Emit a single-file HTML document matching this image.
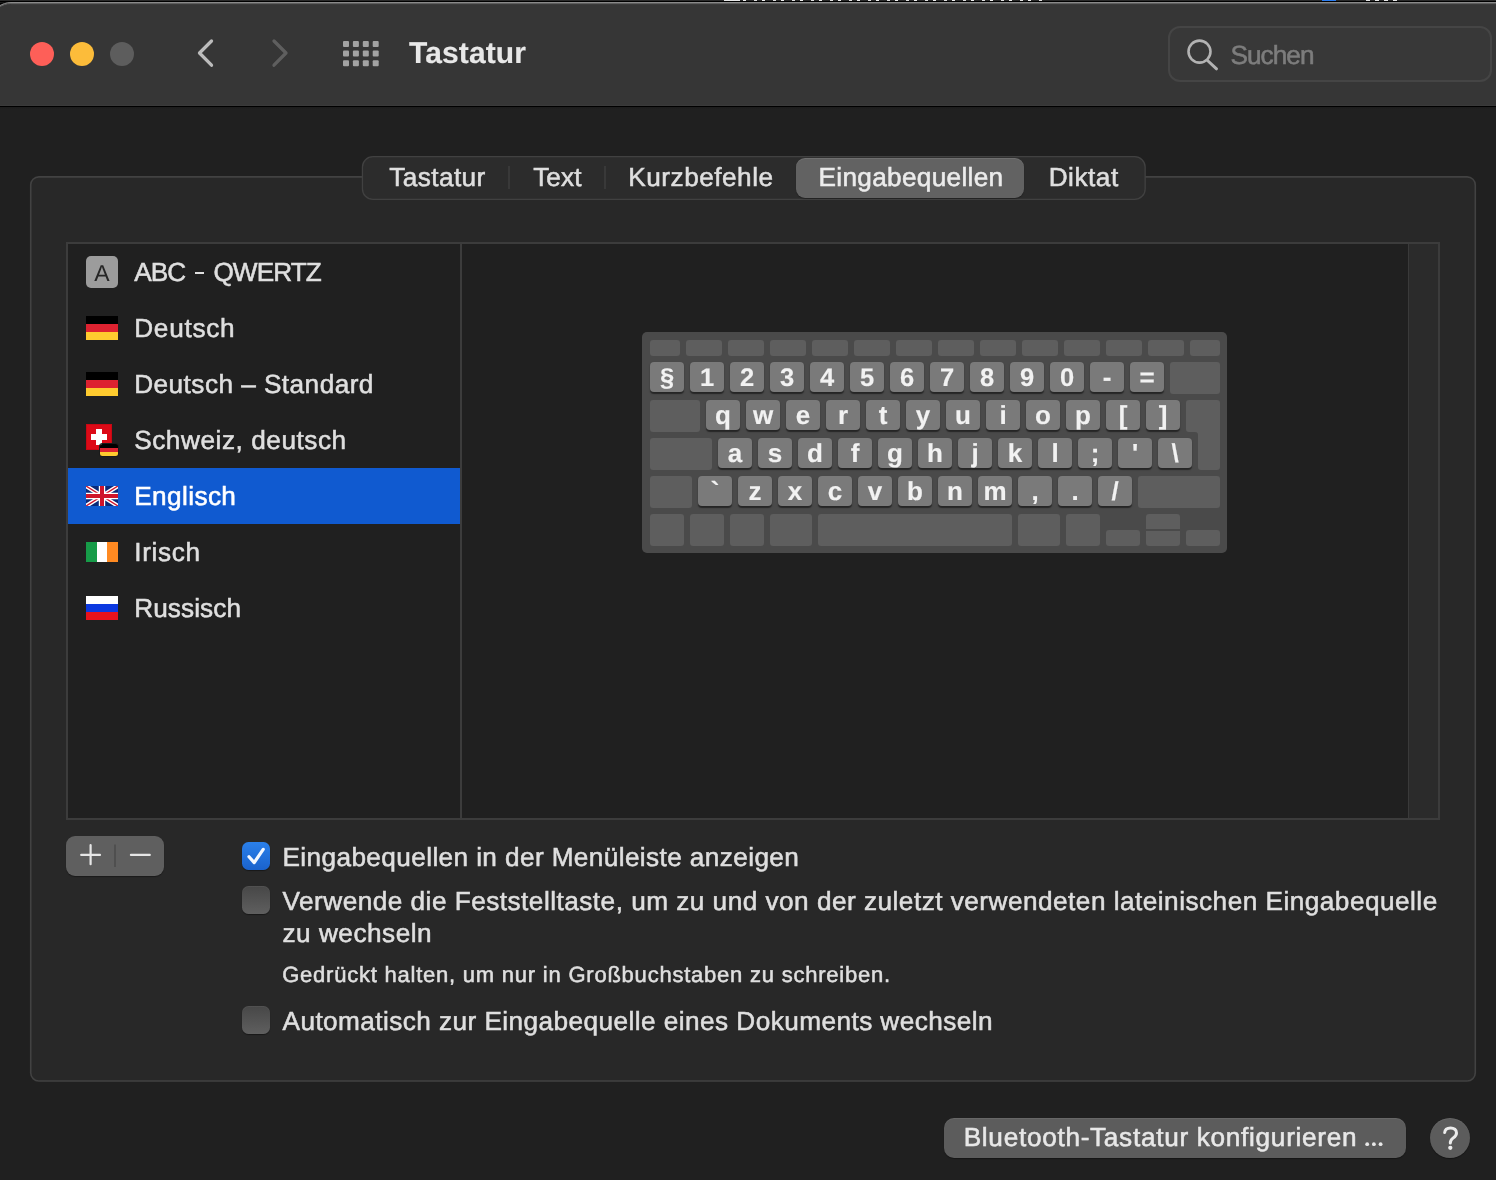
<!DOCTYPE html>
<html><head><meta charset="utf-8"><title>Tastatur</title>
<style>
html,body{margin:0;padding:0;}
body{-webkit-font-smoothing:antialiased;text-rendering:geometricPrecision;width:1496px;height:1180px;overflow:hidden;background:#202020;position:relative;font-family:"Liberation Sans",sans-serif;}
.a{position:absolute;box-sizing:border-box;}
.t{position:absolute;white-space:nowrap;-webkit-text-stroke:0.55px currentColor;}
.k{position:absolute;background:#5e5e5e;border-radius:3px;}
.l{position:absolute;background:#7a7a7a;border-radius:4px;height:30px;width:34px;box-shadow:0 1.5px 1.2px rgba(0,0,0,.5);color:#f2f2f2;font-weight:bold;font-size:26px;line-height:30px;text-align:center;-webkit-text-stroke:0.15px #f2f2f2;}
.d{font-size:25.5px;padding-top:1px;height:29px;}
</style></head><body><div id="w" style="position:absolute;left:0;top:0;width:1496px;height:1180px;overflow:hidden;will-change:transform;">

<div class="a" style="left:0;top:0;width:1496px;height:6px;background:linear-gradient(#2a2a2a 0 1px,#000 1px 2px,#2a2a2a 2px);"></div>
<div class="a" style="left:724px;top:0;width:318px;height:1px;background:repeating-linear-gradient(90deg,#f0f0f0 0 3px,transparent 3px 11px,#e0e0e0 11px 14px,transparent 14px 19px);"></div>
<div class="a" style="left:724px;top:0;width:16px;height:1px;background:#e8e8e8;"></div>
<div class="a" style="left:1322px;top:0;width:14px;height:1px;background:#2b7df0;"></div>
<div class="a" style="left:1366px;top:0;width:32px;height:1px;background:repeating-linear-gradient(90deg,#e8e8e8 0 4px,transparent 4px 9px);"></div>
<div class="a" style="left:0;top:6px;width:1496px;height:100px;background:linear-gradient(#363636 0 99px,#3a3a3a 99px);"></div>
<svg class="a" style="left:0;top:0" width="1496" height="8" viewBox="0 0 1496 8">
<path d="M-1 1.5 H1497" stroke="#000" stroke-width="1"/>
<path d="M-1 3 C3 2.2 7 2 11 2 H1497 V8 H-1 Z" fill="#000"/>
<path d="M-1 5.6 C3 3.6 6 2 11 2 H1497 V8 H-1 Z" fill="#363636"/>
<path d="M-1 7.1 C3 5.1 6 3.5 11 3.5 H1497" fill="none" stroke="#5e5e5e" stroke-width="1"/>
<path d="M-1 6.1 C3 4.1 6 2.5 11 2.5 H1497" fill="none" stroke="#8a8a8a" stroke-width="1"/>
<path d="M11 4.5 H1497" fill="none" stroke="#3b3b3b" stroke-width="1"/>
</svg>
<div class="a" style="left:0;top:106px;width:1496px;height:1px;background:#000;"></div>
<div class="a" style="left:0;top:107px;width:1496px;height:2px;background:linear-gradient(#1c1c1c,#1f1f1f);"></div>
<div class="a" style="left:30px;top:42px;width:24px;height:24px;border-radius:50%;background:#fe5f58;"></div>
<div class="a" style="left:70px;top:42px;width:24px;height:24px;border-radius:50%;background:#fcbc3a;"></div>
<div class="a" style="left:110px;top:42px;width:24px;height:24px;border-radius:50%;background:#5d5d5d;"></div>
<svg class="a" style="left:0;top:0" width="1496" height="106" viewBox="0 0 1496 106">
<path d="M211.5 41 L199.5 53 L211.5 65.2" fill="none" stroke="#bcbcbc" stroke-width="3.3" stroke-linecap="round" stroke-linejoin="round"/>
<path d="M274 41 L286 53 L274 65.2" fill="none" stroke="#5f5f5f" stroke-width="3.3" stroke-linecap="round" stroke-linejoin="round"/>

<rect x="343.0" y="41.0" width="6" height="6" rx="1" fill="#a3a3a3"/>
<rect x="352.9" y="41.0" width="6" height="6" rx="1" fill="#a3a3a3"/>
<rect x="362.8" y="41.0" width="6" height="6" rx="1" fill="#a3a3a3"/>
<rect x="372.7" y="41.0" width="6" height="6" rx="1" fill="#a3a3a3"/>
<rect x="343.0" y="50.6" width="6" height="6" rx="1" fill="#a3a3a3"/>
<rect x="352.9" y="50.6" width="6" height="6" rx="1" fill="#a3a3a3"/>
<rect x="362.8" y="50.6" width="6" height="6" rx="1" fill="#a3a3a3"/>
<rect x="372.7" y="50.6" width="6" height="6" rx="1" fill="#a3a3a3"/>
<rect x="343.0" y="60.2" width="6" height="6" rx="1" fill="#a3a3a3"/>
<rect x="352.9" y="60.2" width="6" height="6" rx="1" fill="#a3a3a3"/>
<rect x="362.8" y="60.2" width="6" height="6" rx="1" fill="#a3a3a3"/>
<rect x="372.7" y="60.2" width="6" height="6" rx="1" fill="#a3a3a3"/>
<rect x="1169" y="27" width="322" height="54" rx="11" fill="#383838" stroke="#454545" stroke-width="2"/>
<circle cx="1199.5" cy="51.6" r="11" fill="none" stroke="#b3b3b3" stroke-width="2.6"/>
<path d="M1207.5 60.5 L1216.5 68.8" stroke="#b3b3b3" stroke-width="3" stroke-linecap="round"/>
</svg>
<div class="t" style="left:409px;top:37px;font-size:30px;line-height:33px;color:#e8e8e8;letter-spacing:0.108px;font-weight:bold;-webkit-text-stroke:0.15px #e8e8e8;">Tastatur</div>
<div class="t" style="left:1230.5px;top:40px;font-size:26.2px;line-height:30px;color:#7d7d7d;letter-spacing:-0.96px;font-weight:normal;">Suchen</div>
<svg class="a" style="left:20px;top:170px" width="1470" height="920" viewBox="20 170 1470 920"><rect x="30.7" y="176.9" width="1444.6" height="904.1" rx="8.2" fill="#282828" stroke="#424242" stroke-width="1.6"/></svg>
<svg class="a" style="left:350px;top:150px" width="810" height="60" viewBox="350 150 810 60"><rect x="362.45" y="156.6" width="782.7" height="42.8" rx="10.5" fill="#2c2c2c" stroke="#414141" stroke-width="1.3"/></svg>
<div class="a" style="left:508px;top:166px;width:2px;height:23px;background:#393939;"></div>
<div class="a" style="left:604px;top:166px;width:2px;height:23px;background:#393939;"></div>
<div class="a" style="left:796px;top:158px;width:228px;height:40px;background:#626262;border-radius:9px;box-shadow:0 1px 1px rgba(0,0,0,.3), inset 0 1px 0 rgba(255,255,255,.09);"></div>
<div class="t" style="left:389.3px;top:162px;font-size:26.2px;line-height:30px;color:#dfdfdf;letter-spacing:0.401px;font-weight:normal;">Tastatur</div>
<div class="t" style="left:533.2px;top:162px;font-size:26.2px;line-height:30px;color:#dfdfdf;letter-spacing:0.065px;font-weight:normal;">Text</div>
<div class="t" style="left:628.3px;top:162px;font-size:26.2px;line-height:30px;color:#dfdfdf;letter-spacing:0.5px;font-weight:normal;">Kurzbefehle</div>
<div class="t" style="left:818.5px;top:162px;font-size:26.2px;line-height:30px;color:#ececec;letter-spacing:0.308px;font-weight:normal;">Eingabequellen</div>
<div class="t" style="left:1048.7px;top:162px;font-size:26.2px;line-height:30px;color:#dfdfdf;letter-spacing:0.52px;font-weight:normal;">Diktat</div>
<div class="a" style="left:66px;top:242px;width:1374px;height:578px;background:#202020;border:2px solid #3c3c3c;"></div>
<div class="a" style="left:460px;top:244px;width:2px;height:574px;background:#3c3c3c;"></div>
<div class="a" style="left:1408px;top:244px;width:30px;height:574px;background:#2b2b2b;border-left:1px solid #3a3a3a;"></div>
<div class="a" style="left:68px;top:468px;width:392px;height:56px;background:#105ad0;"></div>
<div class="a" style="left:86px;top:256px;width:32px;height:32px;border-radius:5px;background:#9c9c9c;"></div>
<div class="t" style="left:94.3px;top:260px;font-size:23px;line-height:26px;color:#262626;letter-spacing:0px;font-weight:normal;-webkit-text-stroke:0;">A</div>
<div class="a" style="left:86px;top:316px;width:32px;height:24px;background:linear-gradient(#000 0 8.0px,#dd2230 8.0px 16.0px,#fecb2f 16.0px);"></div>
<div class="a" style="left:86px;top:372px;width:32px;height:24px;background:linear-gradient(#000 0 8.0px,#dd2230 8.0px 16.0px,#fecb2f 16.0px);"></div>
<div class="a" style="left:86px;top:424px;width:26px;height:26px;background:#dc0a17;box-shadow:inset 0 0 0 1px #c80813;"></div>
<div class="a" style="left:96px;top:429px;width:6px;height:16px;background:#fff;"></div>
<div class="a" style="left:91px;top:434px;width:16px;height:6px;background:#fff;"></div>
<div class="a" style="left:100px;top:444px;width:18px;height:12px;background:linear-gradient(#000 0 4.0px,#dd2230 4.0px 8.0px,#fecb2f 8.0px);border-radius:2.5px;box-shadow:0 0 0 1px #1a1a1a;"></div>
<svg class="a" style="left:86px;top:486px" width="32" height="20" viewBox="0 0 32 20">
<rect width="32" height="20" fill="#0a2a7a"/>
<path d="M0 0L32 20M32 0L0 20" stroke="#fff" stroke-width="4.2"/>
<path d="M0 0L32 20M32 0L0 20" stroke="#cf142b" stroke-width="1.4"/>
<path d="M16 0V20M0 10H32" stroke="#fff" stroke-width="6.4"/>
<path d="M16 0V20M0 10H32" stroke="#cf142b" stroke-width="4"/>
</svg>
<div class="a" style="left:86px;top:542px;width:32px;height:20px;background:linear-gradient(90deg,#169b48 0 10.7px,#fff 10.7px 21.3px,#ff8a22 21.3px);"></div>
<div class="a" style="left:86px;top:596px;width:32px;height:24px;background:linear-gradient(#fff 0 8px,#0c39e0 8px 16px,#e8121c 16px);"></div>
<div class="t" style="left:134.2px;top:257px;font-size:26.2px;line-height:30px;color:#dfdfdf;letter-spacing:-0.95px;font-weight:normal;">ABC</div>
<div class="a" style="left:195px;top:272px;width:9.3px;height:2.3px;background:#dfdfdf;"></div>
<div class="t" style="left:213.4px;top:257px;font-size:26.2px;line-height:30px;color:#dfdfdf;letter-spacing:-0.92px;font-weight:normal;">QWERTZ</div>
<div class="t" style="left:134.2px;top:313px;font-size:26.2px;line-height:30px;color:#dfdfdf;letter-spacing:0.735px;font-weight:normal;">Deutsch</div>
<div class="t" style="left:134.2px;top:369px;font-size:26.2px;line-height:30px;color:#dfdfdf;letter-spacing:0.456px;font-weight:normal;">Deutsch – Standard</div>
<div class="t" style="left:134.2px;top:425px;font-size:26.2px;line-height:30px;color:#dfdfdf;letter-spacing:0.545px;font-weight:normal;">Schweiz, deutsch</div>
<div class="t" style="left:134.2px;top:481px;font-size:26.2px;line-height:30px;color:#ffffff;letter-spacing:0.395px;font-weight:normal;">Englisch</div>
<div class="t" style="left:134.2px;top:537px;font-size:26.2px;line-height:30px;color:#dfdfdf;letter-spacing:0.68px;font-weight:normal;">Irisch</div>
<div class="t" style="left:134.2px;top:593px;font-size:26.2px;line-height:30px;color:#dfdfdf;letter-spacing:0.089px;font-weight:normal;">Russisch</div>
<div class="a" style="left:642px;top:332px;width:585px;height:221px;background:#4a4a4a;border-radius:5px;"></div>
<div class="k" style="left:650px;top:340px;width:30px;height:16px;"></div>
<div class="k" style="left:686px;top:340px;width:36px;height:16px;"></div>
<div class="k" style="left:728px;top:340px;width:36px;height:16px;"></div>
<div class="k" style="left:770px;top:340px;width:36px;height:16px;"></div>
<div class="k" style="left:812px;top:340px;width:36px;height:16px;"></div>
<div class="k" style="left:854px;top:340px;width:36px;height:16px;"></div>
<div class="k" style="left:896px;top:340px;width:36px;height:16px;"></div>
<div class="k" style="left:938px;top:340px;width:36px;height:16px;"></div>
<div class="k" style="left:980px;top:340px;width:36px;height:16px;"></div>
<div class="k" style="left:1022px;top:340px;width:36px;height:16px;"></div>
<div class="k" style="left:1064px;top:340px;width:36px;height:16px;"></div>
<div class="k" style="left:1106px;top:340px;width:36px;height:16px;"></div>
<div class="k" style="left:1148px;top:340px;width:36px;height:16px;"></div>
<div class="k" style="left:1190px;top:340px;width:30px;height:16px;"></div>
<div class="l d" style="left:650px;top:362px;">§</div>
<div class="l d" style="left:690px;top:362px;">1</div>
<div class="l d" style="left:730px;top:362px;">2</div>
<div class="l d" style="left:770px;top:362px;">3</div>
<div class="l d" style="left:810px;top:362px;">4</div>
<div class="l d" style="left:850px;top:362px;">5</div>
<div class="l d" style="left:890px;top:362px;">6</div>
<div class="l d" style="left:930px;top:362px;">7</div>
<div class="l d" style="left:970px;top:362px;">8</div>
<div class="l d" style="left:1010px;top:362px;">9</div>
<div class="l d" style="left:1050px;top:362px;">0</div>
<div class="l" style="left:1090px;top:362px;">-</div>
<div class="l" style="left:1130px;top:362px;">=</div>
<div class="k" style="left:1170px;top:362px;width:50px;height:32px;"></div>
<div class="k" style="left:650px;top:400px;width:50px;height:32px;"></div>
<div class="l" style="left:706px;top:400px;">q</div>
<div class="l" style="left:746px;top:400px;">w</div>
<div class="l" style="left:786px;top:400px;">e</div>
<div class="l" style="left:826px;top:400px;">r</div>
<div class="l" style="left:866px;top:400px;">t</div>
<div class="l" style="left:906px;top:400px;">y</div>
<div class="l" style="left:946px;top:400px;">u</div>
<div class="l" style="left:986px;top:400px;">i</div>
<div class="l" style="left:1026px;top:400px;">o</div>
<div class="l" style="left:1066px;top:400px;">p</div>
<div class="l" style="left:1106px;top:400px;">[</div>
<div class="l" style="left:1146px;top:400px;">]</div>
<svg class="a" style="left:1186px;top:400px" width="34" height="70" viewBox="0 0 34 70"><path d="M3 0H31a3 3 0 0 1 3 3V67a3 3 0 0 1-3 3H15a3 3 0 0 1-3-3V35a3 3 0 0 0-3-3H3a3 3 0 0 1-3-3V3a3 3 0 0 1 3-3Z" fill="#5e5e5e"/></svg>
<div class="k" style="left:650px;top:438px;width:62px;height:32px;"></div>
<div class="l" style="left:718px;top:438px;">a</div>
<div class="l" style="left:758px;top:438px;">s</div>
<div class="l" style="left:798px;top:438px;">d</div>
<div class="l" style="left:838px;top:438px;">f</div>
<div class="l" style="left:878px;top:438px;">g</div>
<div class="l" style="left:918px;top:438px;">h</div>
<div class="l" style="left:958px;top:438px;">j</div>
<div class="l" style="left:998px;top:438px;">k</div>
<div class="l" style="left:1038px;top:438px;">l</div>
<div class="l" style="left:1078px;top:438px;">;</div>
<div class="l" style="left:1118px;top:438px;">'</div>
<div class="l" style="left:1158px;top:438px;">\</div>
<div class="k" style="left:650px;top:476px;width:42px;height:32px;"></div>
<div class="l" style="left:698px;top:476px;">`</div>
<div class="l" style="left:738px;top:476px;">z</div>
<div class="l" style="left:778px;top:476px;">x</div>
<div class="l" style="left:818px;top:476px;">c</div>
<div class="l" style="left:858px;top:476px;">v</div>
<div class="l" style="left:898px;top:476px;">b</div>
<div class="l" style="left:938px;top:476px;">n</div>
<div class="l" style="left:978px;top:476px;">m</div>
<div class="l" style="left:1018px;top:476px;">,</div>
<div class="l" style="left:1058px;top:476px;">.</div>
<div class="l" style="left:1098px;top:476px;">/</div>
<div class="k" style="left:1138px;top:476px;width:82px;height:32px;"></div>
<div class="k" style="left:650px;top:514px;width:34px;height:32px;"></div>
<div class="k" style="left:690px;top:514px;width:34px;height:32px;"></div>
<div class="k" style="left:730px;top:514px;width:34px;height:32px;"></div>
<div class="k" style="left:770px;top:514px;width:42px;height:32px;"></div>
<div class="k" style="left:818px;top:514px;width:194px;height:32px;"></div>
<div class="k" style="left:1018px;top:514px;width:42px;height:32px;"></div>
<div class="k" style="left:1066px;top:514px;width:34px;height:32px;"></div>
<div class="k" style="left:1106px;top:530px;width:34px;height:16px;"></div>
<div class="k" style="left:1146px;top:514px;width:34px;height:15px;border-radius:3px 3px 0 0;"></div>
<div class="k" style="left:1146px;top:531px;width:34px;height:15px;border-radius:0 0 3px 3px;"></div>
<div class="k" style="left:1186px;top:530px;width:34px;height:16px;"></div>
<div class="a" style="left:66px;top:836px;width:98px;height:40px;background:#5f5f5f;border-radius:9px;box-shadow:0 1px 1px rgba(0,0,0,.35);"></div>
<svg class="a" style="left:66px;top:836px" width="98" height="40" viewBox="0 0 98 40">
<path d="M15.2 18.9H34M24.6 9.2V28.2" stroke="#e6e6e6" stroke-width="2.2" stroke-linecap="round"/>
<path d="M64.9 18.9H83.8" stroke="#e6e6e6" stroke-width="2.2" stroke-linecap="round"/>
<path d="M49 8.5V31" stroke="#4c4c4c" stroke-width="1.6"/>
</svg>
<div class="a" style="left:242px;top:842px;width:28px;height:28px;border-radius:6.5px;background:linear-gradient(#2b80ea,#1a62cc);box-shadow:0 1px 1px rgba(0,0,0,.4);"></div>
<svg class="a" style="left:242px;top:842px" width="28" height="28" viewBox="0 0 28 28">
<path d="M7 14.8 L12.2 20.6 L21.2 7.4" fill="none" stroke="#f4f8ff" stroke-width="3.2" stroke-linecap="round" stroke-linejoin="round"/></svg>
<div class="a" style="left:242px;top:886px;width:28px;height:28px;border-radius:6.5px;background:linear-gradient(#474747,#5f5f5f);box-shadow:0 1px 1px rgba(0,0,0,.4), inset 0 1px 0 rgba(255,255,255,.05);"></div>
<div class="a" style="left:242px;top:1006px;width:28px;height:28px;border-radius:6.5px;background:linear-gradient(#474747,#5f5f5f);box-shadow:0 1px 1px rgba(0,0,0,.4), inset 0 1px 0 rgba(255,255,255,.05);"></div>
<div class="t" style="left:282.5px;top:842px;font-size:26.2px;line-height:30px;color:#dfdfdf;letter-spacing:0.388px;font-weight:normal;">Eingabequellen in der Menüleiste anzeigen</div>
<div class="t" style="left:282.5px;top:886px;font-size:26.2px;line-height:30px;color:#dfdfdf;letter-spacing:0.478px;font-weight:normal;">Verwende die Feststelltaste, um zu und von der zuletzt verwendeten lateinischen Eingabequelle</div>
<div class="t" style="left:282.5px;top:918px;font-size:26.2px;line-height:30px;color:#dfdfdf;letter-spacing:0.5px;font-weight:normal;">zu wechseln</div>
<div class="t" style="left:282.2px;top:962px;font-size:22px;line-height:25px;color:#dfdfdf;letter-spacing:0.773px;font-weight:normal;">Gedrückt halten, um nur in Großbuchstaben zu schreiben.</div>
<div class="t" style="left:282.5px;top:1006px;font-size:26.2px;line-height:30px;color:#dfdfdf;letter-spacing:0.434px;font-weight:normal;">Automatisch zur Eingabequelle eines Dokuments wechseln</div>
<div class="a" style="left:944px;top:1118px;width:462px;height:40px;background:#5c5c5c;border-radius:10px;box-shadow:0 1px 1px rgba(0,0,0,.35), inset 0 1px 0 rgba(255,255,255,.07);"></div>
<div class="t" style="left:963.7px;top:1122px;font-size:26.2px;line-height:30px;color:#e8e8e8;letter-spacing:0.7px;font-weight:normal;">Bluetooth-Tastatur konfigurieren</div>
<svg class="a" style="left:1360px;top:1120px" width="120" height="40" viewBox="1360 1120 120 40"><circle cx="1367.2" cy="1144.2" r="1.9" fill="#e8e8e8"/><circle cx="1373.9" cy="1144.2" r="1.9" fill="#e8e8e8"/><circle cx="1380.6" cy="1144.2" r="1.9" fill="#e8e8e8"/></svg>
<div class="a" style="left:1430px;top:1118px;width:40px;height:40px;background:#5c5c5c;border-radius:50%;box-shadow:0 1px 1px rgba(0,0,0,.35), inset 0 1px 0 rgba(255,255,255,.07);"></div>
<svg class="a" style="left:1430px;top:1118px" width="40" height="40" viewBox="1430 1118 40 40"><path d="M1444.7 1132.5C1444.9 1129.5 1447.4 1127.9 1450.6 1127.9C1454 1127.9 1456.5 1129.9 1456.5 1132.9C1456.5 1135.4 1454.8 1136.8 1453 1138.1C1451.2 1139.4 1450.3 1140.4 1450.3 1142.9" fill="none" stroke="#ececec" stroke-width="3" stroke-linecap="round"/><circle cx="1450.3" cy="1147.8" r="2.15" fill="#ececec"/></svg>
</div></body></html>
